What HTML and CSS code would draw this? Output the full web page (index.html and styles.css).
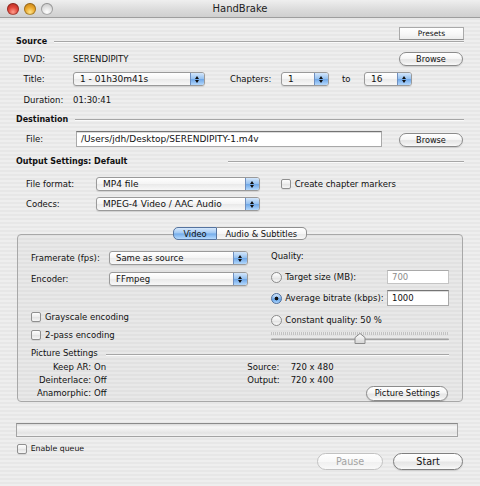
FILE: index.html
```html
<!DOCTYPE html>
<html>
<head>
<meta charset="utf-8">
<title>HandBrake</title>
<link rel="stylesheet" href="styles.css">
</head>
<body>
<div class="window">
  <header class="titlebar">
    <div class="lights">
      <span class="light red"></span><span class="light yellow"></span><span class="light gray"></span>
    </div>
    <div class="title">HandBrake</div>
    <div></div>
  </header>

  <main class="content">
    <div class="presets-row"><div class="btn-square">Presets</div></div>

    <div class="heading src"><span>Source</span><i class="rule"></i></div>
    <div class="row dvd">
      <span class="lbl">DVD:</span><span class="val">SERENDIPITY</span>
      <div class="btn browse">Browse</div>
    </div>
    <div class="row title-row">
      <span class="lbl">Title:</span>
      <div class="popup title-pop"><span class="pv">1 - 01h30m41s</span><span class="cap"></span></div>
      <span class="chap-lbl">Chapters:</span>
      <div class="popup chap-pop"><span class="pv">1</span><span class="cap"></span></div>
      <span class="to">to</span>
      <div class="popup chap-pop"><span class="pv">16</span><span class="cap"></span></div>
    </div>
    <div class="row dur"><span class="lbl">Duration:</span><span class="val">01:30:41</span></div>

    <div class="heading dest"><span>Destination</span><i class="rule"></i></div>
    <div class="row file-row">
      <span class="lbl2">File:</span>
      <div class="field path">/Users/jdh/Desktop/SERENDIPITY-1.m4v</div>
      <div class="btn browse browse2">Browse</div>
    </div>

    <div class="heading out"><span>Output Settings: Default</span><i class="rule"></i></div>
    <div class="row fmt">
      <span class="lbl3">File format:</span>
      <div class="popup wide-pop"><span class="pv">MP4 file</span><span class="cap"></span></div>
      <div class="check chapters"><span class="cbox"></span><span>Create chapter markers</span></div>
    </div>
    <div class="row codecs">
      <span class="lbl3">Codecs:</span>
      <div class="popup wide-pop"><span class="pv">MPEG-4 Video / AAC Audio</span><span class="cap"></span></div>
    </div>

    <section class="tabview">
      <div class="tabs"><span class="tab sel">Video</span><span class="tab last">Audio &amp; Subtitles</span></div>
      <div class="tabbox">
        <div class="cols">
          <div class="col-left">
            <div class="row fps">
              <span class="lbl4">Framerate (fps):</span>
              <div class="popup small-pop"><span class="pv">Same as source</span><span class="cap"></span></div>
            </div>
            <div class="row enc">
              <span class="lbl4">Encoder:</span>
              <div class="popup small-pop"><span class="pv">FFmpeg</span><span class="cap"></span></div>
            </div>
            <div class="check gray-chk"><span class="cbox"></span><span>Grayscale encoding</span></div>
            <div class="check pass-chk"><span class="cbox"></span><span>2-pass encoding</span></div>
          </div>
          <div class="col-right">
            <div class="quality">Quality:</div>
            <div class="row target">
              <span class="radio"></span><span>Target size (MB):</span>
              <div class="field num disabled">700</div>
            </div>
            <div class="row avg">
              <span class="radio on"></span><span>Average bitrate (kbps):</span>
              <div class="field num tall">1000</div>
            </div>
            <div class="row cq">
              <span class="radio"></span><span>Constant quality: 50 %</span>
            </div>
            <svg class="slider" width="178" height="15" viewBox="0 0 178 15">
              <defs>
                <linearGradient id="kg" x1="0" y1="0" x2="0" y2="1">
                  <stop offset="0" stop-color="#ffffff"/>
                  <stop offset="1" stop-color="#d4d4d4"/>
                </linearGradient>
              </defs>
              <line x1="0" y1="3.5" x2="178" y2="3.5" stroke="#c2c2c2" stroke-width="3" stroke-dasharray="1 1"/>
              <rect x="0" y="8.5" width="178" height="2" rx="1" fill="#a2a2a2"/>
              <rect x="0" y="10.5" width="178" height="1" fill="#fbfbfb"/>
              <path d="M89 3.5 L94 7.5 V13.5 H84 V7.5 Z" fill="url(#kg)" stroke="#8a8a8a" stroke-width="1"/>
            </svg>
          </div>
        </div>

        <div class="heading pic"><span>Picture Settings</span><i class="rule"></i></div>
        <div class="picgrid">
          <span class="pl">Keep AR:</span><span>On</span><span>Source:</span><span>720 x 480</span>
          <span class="pl">Deinterlace:</span><span>Off</span><span>Output:</span><span>720 x 400</span>
          <span class="pl">Anamorphic:</span><span>Off</span><span></span><div class="btn picbtn">Picture Settings</div>
        </div>
      </div>
    </section>

    <div class="progress"></div>

    <div class="bottom">
      <div class="check queue"><span class="cbox"></span><span>Enable queue</span></div>
      <div class="actions">
        <div class="btn big disabled">Pause</div>
        <div class="btn big start">Start</div>
      </div>
    </div>
  </main>
</div>
</body>
</html>
```

FILE: styles.css
```css
* { box-sizing: border-box; margin: 0; padding: 0; }

html, body {
  width: 480px;
  height: 486px;
  overflow: hidden;
}

body {
  font-family: "DejaVu Sans", "Liberation Sans", sans-serif;
  font-size: 8.5px;
  color: #111;
  background: repeating-linear-gradient(to bottom, #eeeeee 0 2px, #e7e7e7 2px 4px);
}

.window { width: 480px; height: 486px; }

/* ---------- title bar ---------- */
.titlebar {
  height: 18px;
  display: grid;
  grid-template-columns: 1fr auto 1fr;
  align-items: center;
  background: linear-gradient(#efefef, #dadada 60%, #cfcfcf);
  border-bottom: 1px solid #9e9e9e;
}
.lights { display: flex; gap: 4.7px; padding-left: 7.3px; }
.light {
  width: 12px; height: 12px; border-radius: 50%;
  box-shadow: inset 0 0 0 1px rgba(0,0,0,0.28);
}
.light.red { background: radial-gradient(circle at 50% 75%, #ff9d8c 0, #e0453a 45%, #a52218 100%); }
.light.yellow { background: radial-gradient(circle at 50% 75%, #ffe48a 0, #eaa72c 45%, #b77512 100%); }
.light.gray { background: radial-gradient(circle at 50% 75%, #ffffff 0, #e2e2e2 45%, #b9b9b9 100%); }
.title { font-size: 10px; color: #222; }

/* ---------- content ---------- */
.content { padding: 0 16px; }

.presets-row { display: flex; justify-content: flex-end; padding-top: 9px; }
.btn-square {
  width: 65px; height: 13px;
  display: flex; align-items: center; justify-content: center;
  font-size: 7.5px;
  background: linear-gradient(#ffffff, #f7f7f7 55%, #ececec);
  border: 1px solid #a9a9a9;
  border-bottom-color: #8e8e8e;
}

.heading {
  display: flex; align-items: center;
  height: 12px;
  font-weight: bold;
  font-size: 8px;
  white-space: nowrap;
}
.heading .rule {
  flex: 1;
  height: 2px;
  margin-left: 7px;
  margin-top: 2px;
  border-top: 1px solid #a6a6a6;
  border-bottom: 1px solid #fafafa;
}
.heading.src { margin-top: -5px; }
.heading.dest { margin-top: 7px; }
.heading.out { margin-top: 8px; }
.heading.out .rule { flex: 0 0 236px; margin-left: auto; }

.row { display: flex; align-items: center; white-space: nowrap; }

.lbl { width: 49.5px; }
.dvd, .title-row, .dur { padding-left: 7.5px; }
.dvd { height: 15px; margin-top: 4px; }
.title-row { height: 14px; margin-top: 6px; }
.dur { height: 13px; margin-top: 7px; }

.chap-lbl { margin-left: 25px; width: 51px; }
.to { margin-left: 13px; width: 22px; }

/* push button */
.btn {
  display: flex; align-items: center; justify-content: center;
  height: 14px;
  border: 1px solid #8b8b8b;
  border-radius: 8px;
  font-size: 8.2px;
  color: #111;
  background: linear-gradient(#ffffff 0%, #f6f6f6 45%, #e6e6e6 55%, #eeeeee 80%, #fbfbfb 100%);
  box-shadow: 0 1px 1px rgba(0,0,0,0.12);
}
.browse { width: 64px; margin-left: auto; margin-right: 1px; }

/* popup button */
.popup {
  display: flex;
  height: 14px;
  border: 1px solid #9a9a9a;
  border-radius: 3px;
  background: linear-gradient(#ffffff, #f4f4f4 50%, #e9e9e9 51%, #f8f8f8);
  font-size: 9px;
  overflow: hidden;
  box-shadow: 0 1px 1px rgba(0,0,0,0.1);
}
.popup .pv { flex: 1; padding-left: 6px; display: flex; align-items: center; }
.popup .cap {
  width: 14px;
  position: relative;
  border-left: 1px solid #6f8fbf;
  background: linear-gradient(#d3e6fb, #97c2f0 48%, #6ea7e8 52%, #b4d8fc);
}
.popup .cap::before,
.popup .cap::after {
  content: "";
  position: absolute;
  left: 4px;
  width: 0; height: 0;
  border-left: 2.5px solid transparent;
  border-right: 2.5px solid transparent;
}
.popup .cap::before { top: 2.5px; border-bottom: 3px solid #111; }
.popup .cap::after { bottom: 2.5px; border-top: 3px solid #111; }

.title-pop { width: 132px; }
.chap-pop { width: 48px; }
.wide-pop { width: 164px; }
.small-pop { width: 139px; font-size: 8.5px; }

/* text field */
.field {
  display: flex; align-items: center;
  background: #fff;
  border: 1px solid #a8a8a8;
  border-top-color: #747474;
  box-shadow: inset 0 1px 0 #dcdcdc;
  padding-left: 4px;
}

.file-row { height: 17px; margin-top: 5px; padding-left: 10px; align-items: flex-start; }
.lbl2 { width: 50px; align-self: center; }
.path { width: 306px; height: 16px; margin-top: 0.5px; font-size: 9px; }
.browse2 { margin-top: 2.5px; }

.fmt, .codecs { height: 14px; padding-left: 10px; }
.fmt { margin-top: 10px; }
.codecs { margin-top: 6px; }
.lbl3 { width: 70px; }

/* checkbox */
.check { display: flex; align-items: center; white-space: nowrap; }
.cbox {
  width: 10px; height: 10px;
  margin-right: 4px;
  border: 1px solid #8f8f8f;
  border-radius: 2px;
  background: linear-gradient(#fdfdfd, #ececec 50%, #e2e2e2 51%, #f6f6f6);
  box-shadow: 0 1px 0 rgba(0,0,0,0.08);
}
.chapters { margin-left: 20.7px; }

/* ---------- tab view ---------- */
.tabview { margin-top: 16px; }
.tabs {
  display: flex; justify-content: center;
  height: 13px;
  position: relative;
  z-index: 1;
}
.tab {
  display: flex; align-items: center; justify-content: center;
  font-size: 8.3px;
  border: 1px solid #8f8f8f;
  background: linear-gradient(#ffffff, #f6f6f6 50%, #e8e8e8 51%, #f7f7f7);
}
.tab.sel {
  width: 43.5px;
  border-color: #55739e;
  border-radius: 5px 0 0 5px;
  background: linear-gradient(#d6e8fc, #9dc6f2 48%, #72abea 52%, #b6dafd);
}
.tab.last {
  width: 90px;
  border-left: none;
  border-radius: 0 5px 5px 0;
}

.tabbox {
  margin-top: -6px;
  margin-left: 1px;
  width: 446px;
  height: 168px;
  border: 1px solid #a8a8a8;
  border-radius: 4px;
  background: rgba(0,0,0,0.025);
  padding: 16px 13px 0 13px;
}

.cols {
  display: grid;
  grid-template-columns: 217px 178px;
  column-gap: 23px;
}

.fps, .enc { height: 14px; }
.enc { margin-top: 7px; }
.lbl4 { width: 78px; }
.gray-chk { height: 11px; margin-top: 25.5px; }
.pass-chk { height: 11px; margin-top: 7px; }

.quality { height: 10px; display: flex; align-items: center; }
.radio {
  width: 11px; height: 11px;
  margin-right: 3.3px;
  border-radius: 50%;
  border: 1px solid #8b8b8b;
  background: linear-gradient(#fefefe, #ececec 50%, #e0e0e0 51%, #f8f8f8);
  flex: none;
}
.radio.on {
  border-color: #4d6e9c;
  background: radial-gradient(circle, #111 0 1.6px, transparent 2.2px),
              linear-gradient(#cfe4fb, #8fbdf0 48%, #5f9fe6 52%, #aad3fc);
}
.target { height: 14px; margin-top: 9px; }
.avg { height: 16px; margin-top: 6px; }
.cq { height: 12px; margin-top: 8px; }
.num { margin-left: auto; width: 62px; }
.target .num { height: 14px; }
.avg .num { height: 16px; }
.num.disabled { color: #8c8c8c; border-color: #c4c4c4; border-top-color: #a9a9a9; box-shadow: none; }
.slider { display: block; margin-top: 4px; }

.heading.pic {
  margin-top: 2px;
  font-weight: normal;
  font-size: 8.5px;
}
.heading.pic .rule { margin-left: 8px; margin-top: 4px; }

.picgrid {
  display: grid;
  grid-template-columns: 60px 150.3px 40.4px 1fr;
  grid-template-rows: repeat(3, 13px);
  column-gap: 3px;
  align-items: center;
  margin-top: 1.5px;
  white-space: nowrap;
}
.pl { text-align: right; }
.picbtn {
  justify-self: end;
  width: 82px;
  height: 15px;
  font-size: 8.3px;
  margin-right: 0.7px;
}

/* ---------- progress + bottom ---------- */
.progress {
  margin-top: 21px;
  width: 442px;
  height: 14px;
  border: 1px solid #a3a3a3;
  border-top-color: #8a8a8a;
  background: linear-gradient(#d9d9d9, #f7f7f7 25%, #ececec 55%, #e3e3e3 75%, #f3f3f3);
}

.bottom {
  display: flex;
  align-items: flex-start;
  margin-top: 6px;
}
.queue { height: 11px; margin-left: 0.7px; font-size: 7.8px; }
.actions {
  display: flex;
  gap: 10px;
  margin-left: auto;
  margin-top: 9.7px;
  margin-right: 0.7px;
}
.btn.big { height: 17px; border-radius: 9px; font-size: 9.6px; }
.btn.disabled {
  width: 65.4px;
  color: #a3a3a3;
  border-color: #c2c2c2;
  box-shadow: none;
  background: linear-gradient(#ffffff, #f8f8f8 50%, #efefef 51%, #f9f9f9);
}
.btn.start { width: 70.6px; border-color: #7f7f7f; }
```
